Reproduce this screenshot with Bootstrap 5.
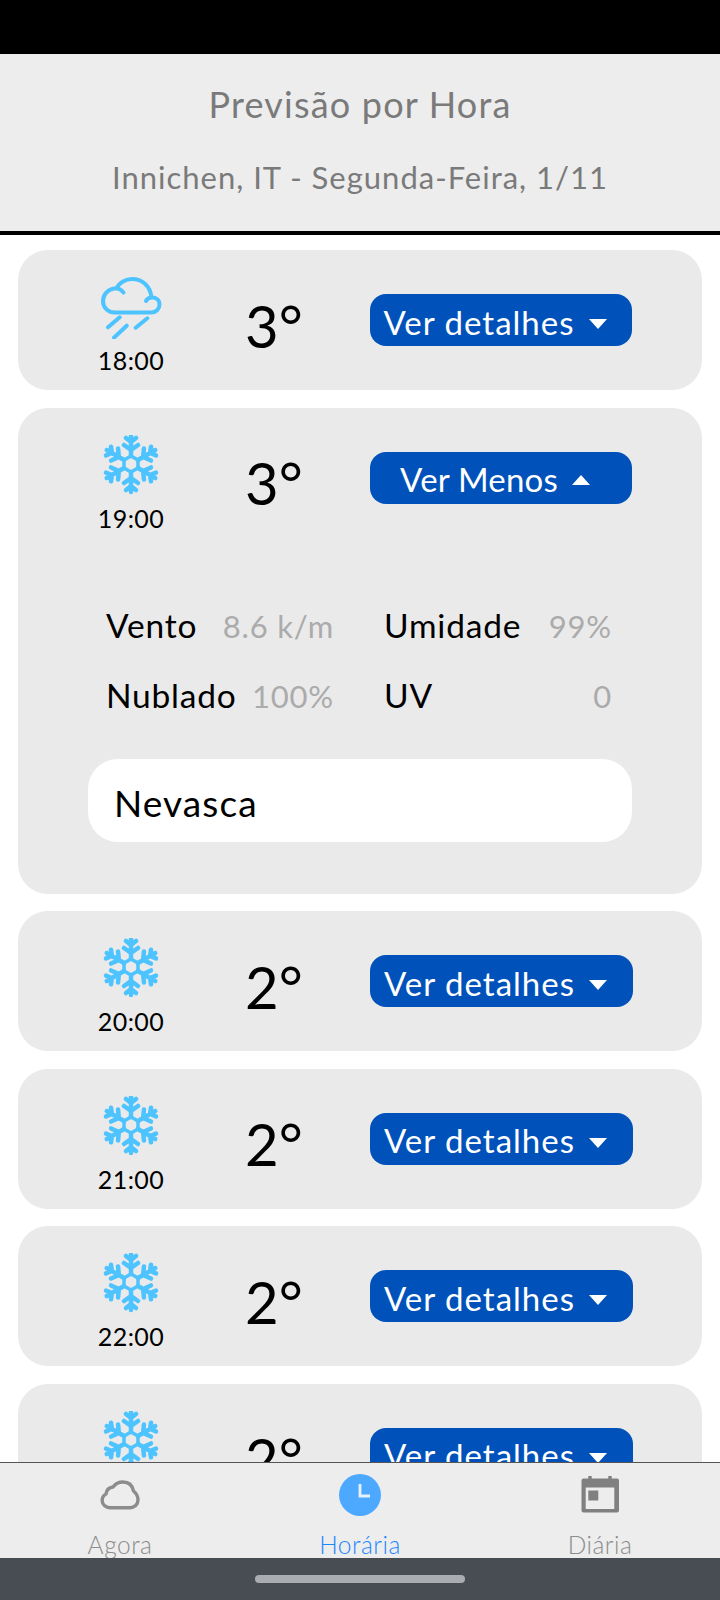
<!DOCTYPE html>
<html lang="pt">
<head>
    <meta charset="UTF-8">
    <title>Previsão por Hora</title>
    <link href="https://cdn.jsdelivr.net/npm/bootstrap@5.3.0/dist/css/bootstrap.min.css" rel="stylesheet">
    <style>
        html, body { height: 100%; }
        body { font-family: "Lato", "Noto Sans", sans-serif; background: #fff; color: #000; overflow: hidden; }
        .status-strip { height: 54px; background: #000; }
        .page-head { height: 181px; background: #ededed; border-bottom: 4px solid #000; color: #7a7a7a; }
        .head-title { font-size: 36px; letter-spacing: 1.2px; line-height: 1; margin-top: 32px; }
        .head-sub { font-size: 31px; letter-spacing: 1px; line-height: 1; margin-top: 40px; }
        .hour-list { padding: 15px 18px 0; gap: 17.5px; }
        .hour-card { background: #eaeaea; border-radius: 30px; flex: none; }
        .hour-main { height: 140px; }
        .hour-time { width: 122px; margin-left: 52px; margin-top: 10px; }
        .hour-time svg { width: 62px; height: 62px; display: block; }
        .time-label { font-size: 25px; line-height: 1; letter-spacing: .4px; margin-top: 9px; }
        .temp-col { width: 125px; margin-left: 53px; margin-top: 11px; font-size: 58px; line-height: 1; }
        .more-btn { width: 262px; height: 52px; padding: 4px 12px 0 0; background: #0052ba; border: 0; border-radius: 16px; color: #fff; font-size: 33px; letter-spacing: 1px; line-height: 1; }
        .more-btn:hover { background: #0052ba; color: #fff; }
        .btn-wide { width: 263px; }
        .btn-tight { letter-spacing: .2px; }
        .tri-down, .tri-up { width: 0; height: 0; border-left: 9px solid transparent; border-right: 9px solid transparent; margin-left: 14px; }
        .tri-down { border-top: 10px solid #fff; margin-top: 4px; }
        .tri-up { border-bottom: 10px solid #fff; }
        .detail-grid { margin: 43px 90px 0 88px; grid-template-columns: 228px 228px; column-gap: 50px; grid-auto-rows: 70px; font-size: 33.500px; letter-spacing: .8px; }
        .detail-val { color: #ababab; font-size: 31px; letter-spacing: .8px; }
        .cond-box { margin: 28px 70px 52px; height: 83px; padding: 6px 0 0 26px; background: #fff; border-radius: 30px; font-size: 37px; letter-spacing: 1.100px; }
        .tab-bar { height: 96px; background: #ededed; border-top: 1px solid #555; flex: none; }
        .tab-item { color: #8c8c8c; font-size: 24.500px; letter-spacing: .5px; line-height: 1; font-weight: 300; }
        .tab-item.is-active { color: #1e88ff; }
        .tab-icon { height: 56px; margin-top: 4px; }
        .tab-label { margin-top: 10px; }
        .gesture-bar { height: 42px; background: #474d52; flex: none; }
        .gesture-pill { width: 210px; height: 8px; background: #a9adb0; border-radius: 4px; }
    </style>
</head>
<body class="d-flex flex-column">

<div class="status-strip flex-shrink-0"></div>

<header class="page-head flex-shrink-0 text-center">
    <div class="head-title">Previsão por Hora</div>
    <div class="head-sub">Innichen, IT - Segunda-Feira, 1/11</div>
</header>

<main class="hour-list d-flex flex-column flex-grow-1 overflow-hidden" id="hourList"></main>

<nav class="tab-bar d-flex">
    <div class="tab-item flex-fill w-100 text-center">
        <div class="tab-icon d-flex align-items-center justify-content-center">
            <svg width="40" height="30" viewBox="0 0 40 30"><path d="M10 27.700C5.500 27.700 2.200 24.500 2.200 20.500C2.200 17.500 4 15 6 14C6.500 10 9 7.500 13 7C15.500 3.500 19 2 23 2C29 2 32.500 6 33.500 11C36 13 38 16 38 20C38 24.500 34.500 27.700 30 27.700Z" fill="none" stroke="#8c8c8c" stroke-width="3.400" stroke-linejoin="round"/></svg>
        </div>
        <div class="tab-label">Agora</div>
    </div>
    <div class="tab-item is-active flex-fill w-100 text-center">
        <div class="tab-icon d-flex align-items-center justify-content-center">
            <svg width="42" height="42" viewBox="0 0 42 42"><circle cx="21" cy="21" r="21" fill="#4da9ff"/><path d="M21 10v12h10" fill="none" stroke="#e8f0fa" stroke-width="2.800"/></svg>
        </div>
        <div class="tab-label">Horária</div>
    </div>
    <div class="tab-item flex-fill w-100 text-center">
        <div class="tab-icon d-flex align-items-center justify-content-center">
            <svg width="38" height="38" viewBox="0 0 38 38"><path d="M7.300 0h3.400v2.500h16.600V0h3.400v2.500h5.300a2 2 0 0 1 2 2v30a2 2 0 0 1-2 2H2.500a2 2 0 0 1-2-2v-30a2 2 0 0 1 2-2h4.800zM4.700 11.500V33h28.600V11.500z" fill="#808080" fill-rule="evenodd"/><rect x="7.300" y="14.500" width="10" height="10" fill="#808080"/></svg>
        </div>
        <div class="tab-label">Diária</div>
    </div>
</nav>

<div class="gesture-bar d-flex align-items-center justify-content-center">
    <div class="gesture-pill"></div>
</div>

<script>
    const rainIcon = `<svg viewBox="-1 0 62 62"><g fill="none" stroke="#4dc3ff" stroke-width="4" stroke-linecap="round"><path d="M22.500 15.500C20 12.500 16 11 13 11.500C6.500 12.500 2 18 2 24C2 30.500 7 35.500 13.500 35.500H50C55 35.500 58.500 32 58.500 27.500C58.500 23 55 20.500 51 20.500C48.500 20.500 46 22 45 24"/><path d="M15.500 11.500C18 5.500 25 2 31 2C41 2 49 8.500 50.500 20"/><path d="M18.700 40.300L7 50.300M25.700 48.700L13 60.700M46.300 41.300L34.700 50.700"/></g></svg>`;
    const snowIcon = `<svg viewBox="0 2 62 62"><g fill="none" stroke="#4dc3ff" stroke-width="4.500" stroke-linecap="round" stroke-linejoin="round"><path d="M31 23l7 4v8l-7 4-7-4v-8z" stroke-width="3.500"/>` +
        [0, 60, 120, 180, 240, 300].map(a => `<g transform="rotate(${a} 31 31)"><path d="M31 23V3M31 9l-5-4M31 9l5-4M31 17l-7-5M31 17l7-5"/></g>`).join("") + `</g></svg>`;

    const hours = [
        { time: "18:00", temp: "3°", icon: rainIcon },
        { time: "19:00", temp: "3°", icon: snowIcon, open: true },
        { time: "20:00", temp: "2°", icon: snowIcon, wide: true },
        { time: "21:00", temp: "2°", icon: snowIcon, wide: true },
        { time: "22:00", temp: "2°", icon: snowIcon, wide: true },
        { time: "23:00", temp: "2°", icon: snowIcon, wide: true }
    ];

    const detailHtml = `
        <div class="detail-grid d-grid align-items-center">
            <div class="d-flex justify-content-between align-items-baseline"><span>Vento</span><span class="detail-val">8.6 k/m</span></div>
            <div class="d-flex justify-content-between align-items-baseline"><span>Umidade</span><span class="detail-val">99%</span></div>
            <div class="d-flex justify-content-between align-items-baseline"><span>Nublado</span><span class="detail-val">100%</span></div>
            <div class="d-flex justify-content-between align-items-baseline"><span>UV</span><span class="detail-val">0</span></div>
        </div>
        <div class="cond-box d-flex align-items-center">Nevasca</div>`;

    document.getElementById("hourList").innerHTML = hours.map(h => `
        <section class="hour-card">
            <div class="hour-main d-flex align-items-center">
                <div class="hour-time d-flex flex-column align-items-center">
                    ${h.icon}
                    <div class="time-label">${h.time}</div>
                </div>
                <div class="temp-col">${h.temp}</div>
                <button type="button" class="btn more-btn ${h.wide ? "btn-wide" : ""} ${h.open ? "btn-tight" : ""} d-flex align-items-center justify-content-center">
                    ${h.open ? "Ver Menos" : "Ver detalhes"}<span class="${h.open ? "tri-up" : "tri-down"}"></span>
                </button>
            </div>
            ${h.open ? detailHtml : ""}
        </section>`).join("");
</script>
<script src="https://cdn.jsdelivr.net/npm/bootstrap@5.3.0/dist/js/bootstrap.bundle.min.js"></script>
</body>
</html>
